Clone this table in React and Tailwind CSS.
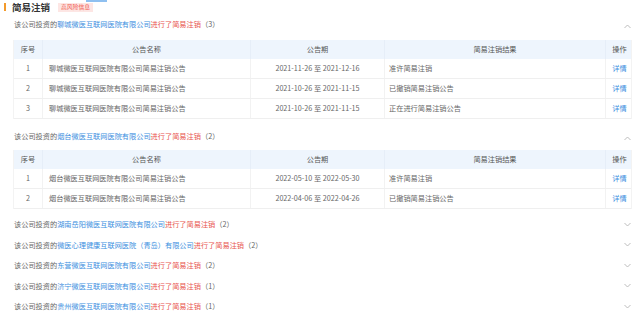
import React from 'react';

const cols = 'grid grid-cols-[29px_208px_134px_221px_27px]';

const sections = [
  {
    company: '聊城微医互联网医院有限公司',
    count: 3,
    open: true,
    rows: [
      ['聊城微医互联网医院有限公司简易注销公告', '2021-11-26 至 2021-12-16', '准许简易注销'],
      ['聊城微医互联网医院有限公司简易注销公告', '2021-10-26 至 2021-11-15', '已撤销简易注销公告'],
      ['聊城微医互联网医院有限公司简易注销公告', '2021-10-26 至 2021-11-15', '正在进行简易注销公告'],
    ],
  },
  {
    company: '烟台微医互联网医院有限公司',
    count: 2,
    open: true,
    rows: [
      ['烟台微医互联网医院有限公司简易注销公告', '2022-05-10 至 2022-05-30', '准许简易注销'],
      ['烟台微医互联网医院有限公司简易注销公告', '2022-04-06 至 2022-04-26', '已撤销简易注销公告'],
    ],
  },
  { company: '湖南岳阳微医互联网医院有限公司', count: 2 },
  { company: '微医心理健康互联网医院（青岛）有限公司', count: 2 },
  { company: '东营微医互联网医院有限公司', count: 2 },
  { company: '济宁微医互联网医院有限公司', count: 1 },
  { company: '贵州微医互联网医院有限公司', count: 1 },
];

function Chevron({ up }) {
  return (
    <svg width="7" height="5" viewBox="0 0 7 5" className={`shrink-0 ${up ? 'mt-[4px]' : ''}`}>
      <path
        d={up ? 'M0.5 4L3.5 1L6.5 4' : 'M0.5 1L3.5 4L6.5 1'}
        fill="none"
        stroke="#b5b5b5"
        strokeWidth="0.9"
      />
    </svg>
  );
}

function Line({ s, tall }) {
  return (
    <div className={`flex items-center justify-between pl-[14px] pr-[9px] ${tall ? 'h-[20.5px]' : 'h-[20px]'}`}>
      <p className="text-[7.2px] leading-[10px] text-[#666]">
        该公司投资的<span className="text-[#3d8fe0]">{s.company}</span>
        <span className="text-[#e8554e]">进行了简易注销</span>（{s.count}）
      </p>
      <Chevron up={s.open} />
    </div>
  );
}

function Table({ rows }) {
  return (
    <div className="mx-[13px] w-[619px] border-x border-[#f3f3f3] text-[7.2px] text-[#666]">
      <div className={`${cols} h-[19px] items-center bg-[#eef5fd] text-[#555]`}>
        <div className="text-center border-r border-[#e6eef8] h-full flex items-center justify-center">序号</div>
        <div className="text-center border-r border-[#e6eef8] h-full flex items-center justify-center">公告名称</div>
        <div className="text-center border-r border-[#e6eef8] h-full flex items-center justify-center">公告期</div>
        <div className="text-center border-r border-[#e6eef8] h-full flex items-center justify-center">简易注销结果</div>
        <div className="text-center h-full flex items-center justify-center">操作</div>
      </div>
      {rows.map((r, i) => (
        <div key={i} className={`${cols} h-[20px] border-b border-[#efefef]`}>
          <div className="flex items-center justify-center border-r border-[#f2f2f2]">{i + 1}</div>
          <div className="flex items-center pl-[6px] border-r border-[#f2f2f2]">{r[0]}</div>
          <div className="flex items-center justify-center border-r border-[#f2f2f2]">{r[1]}</div>
          <div className="flex items-center pl-[4px] border-r border-[#f2f2f2]">{r[2]}</div>
          <div className="flex items-center justify-center text-[#3d8fe0]">详情</div>
        </div>
      ))}
    </div>
  );
}

export default function App() {
  return (
    <div
      className="relative w-[640px] h-[319px] bg-white overflow-hidden"
      style={{ fontFamily: '"Noto Sans CJK SC", "Noto Sans", sans-serif' }}
    >
      <div className="absolute left-[86px] top-0 w-[21px] h-[2px] bg-[#8fc0f0]" />

      <div className="flex items-center h-[14px] pl-[4px]">
        <div className="w-[2px] h-[8px] bg-[#f39a2b]" />
        <span className="ml-[6px] text-[9.5px] font-bold text-[#333] leading-[13px]">简易注销</span>
        <span className="ml-[8px] px-[3px] h-[9px] flex items-center bg-[#fde6e4] text-[#f0554a] text-[5.8px] leading-[8px]">高风险信息</span>
      </div>

      <Line s={sections[0]} />
      <div className="mt-[6px]">
        <Table rows={sections[0].rows} />
      </div>

      <div className="mt-[7px]">
        <Line s={sections[1]} />
      </div>
      <div className="mt-[4px]">
        <Table rows={sections[1].rows} />
      </div>

      <div className="mt-[5px] flex flex-col">
        {sections.slice(2).map((s, i) => (
          <Line key={i} s={s} tall />
        ))}
      </div>
    </div>
  );
}
